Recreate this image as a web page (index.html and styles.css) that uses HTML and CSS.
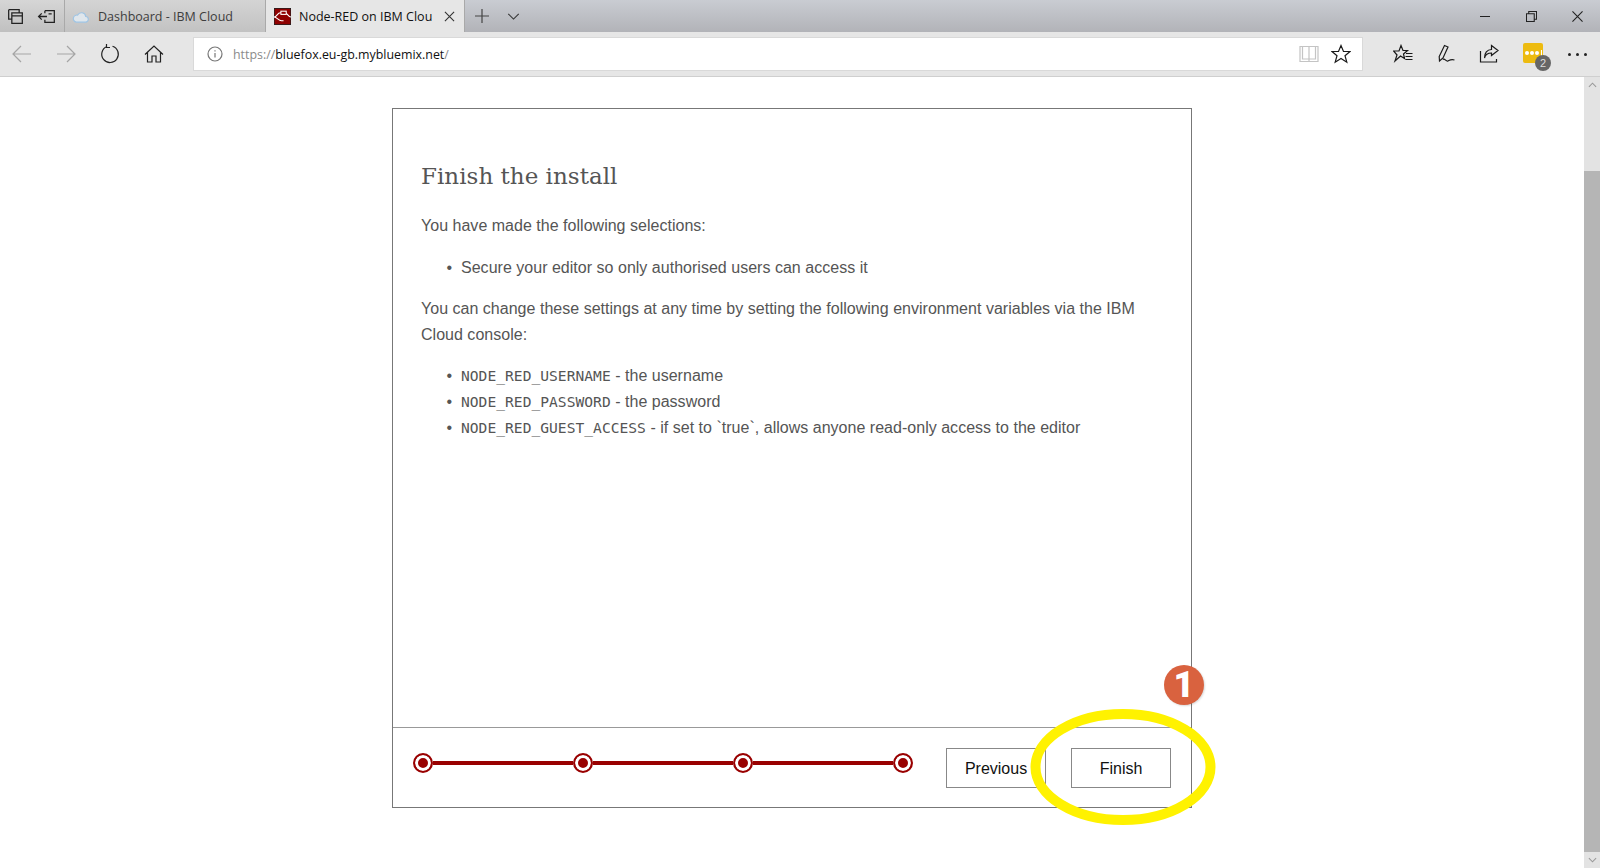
FILE: index.html
```html
<!DOCTYPE html>
<html lang="en">
<head>
<meta charset="UTF-8">
<title>Node-RED on IBM Cloud</title>
<link rel="stylesheet" href="styles.css">
</head>
<body>
<div class="window">
  <!-- tab strip -->
  <div class="tabbar">
    <div class="tab-tools">
      <svg class="icon" viewBox="0 0 20 20"><path d="M3.500 3.500h10v3M3.500 3.500v9h3M6.500 6.500h10v10h-10zM6.500 9.500h10"/></svg>
      <svg class="icon" viewBox="0 0 20 20"><path d="M7.500 4.500h9v11h-9v-2.500M7.500 7v-2.500M1.500 10h8M4.500 7l-3 3 3 3M11 7.500h3"/></svg>
    </div>
    <div class="tab">
      <svg class="favicon" viewBox="0 0 18 18"><path class="cloud" d="M4.500 15h9.500a3 3 0 0 0 .5-6 4.500 4.500 0 0 0-8.500-1.500 3.800 3.800 0 0 0-1.500 7.500z"/></svg>
      <span class="tab-title">Dashboard - IBM Cloud</span>
    </div>
    <div class="tab tab-active">
      <svg class="favicon" viewBox="0 0 16 16">
        <rect width="16" height="16" rx="1.500" fill="#8f0000"/>
        <path class="nodes" d="M0 8.500c3 0 3-4 6-4h2M0 8.500c3 0 4 3.500 7 3.500h2M10 4.500c3 0 3 4 6 4"/>
        <rect class="node" x="6.500" y="3" width="5" height="3"/>
      </svg>
      <span class="tab-title">Node-RED on IBM Clou</span>
      <svg class="tab-close" viewBox="0 0 12 12"><path d="M1 1l10 10M11 1L1 11"/></svg>
    </div>
    <div class="tab-actions">
      <svg class="icon-plus" viewBox="0 0 14 14"><path d="M7 0v14M0 7h14"/></svg>
      <svg class="icon-chevron" viewBox="0 0 14 8"><path d="M1 1l6 6 6-6"/></svg>
    </div>
    <div class="win-controls">
      <div class="win-btn"><span class="win-min"></span></div>
      <div class="win-btn"><svg class="icon-win" viewBox="0 0 12 12"><path d="M3 3V.500h8.500V9H9M.500 3H9v8.500H.500z"/></svg></div>
      <div class="win-btn"><svg class="icon-win" viewBox="0 0 12 12"><path d="M.500 .500l11 11M11.500 .500l-11 11"/></svg></div>
    </div>
  </div>

  <!-- address bar -->
  <div class="toolbar">
    <div class="nav">
      <div class="tool"><svg class="icon-lg faded" viewBox="0 0 20 20"><path d="M19 10H1M9 2l-8 8 8 8"/></svg></div>
      <div class="tool"><svg class="icon-lg faded" viewBox="0 0 20 20"><path d="M1 10h18M11 2l8 8-8 8"/></svg></div>
      <div class="tool"><svg class="icon-lg" viewBox="0 0 20 20"><path d="M7 2.500a8.300 8.300 0 1 0 5.500-.200M6.500 0v3.500H10"/></svg></div>
      <div class="tool"><svg class="icon-lg" viewBox="0 0 20 20"><path d="M1 10.500L10 2l9 8.500M3.500 8.500V18h4.500v-6h4v6h4.500V8.500"/></svg></div>
    </div>
    <div class="address">
      <svg class="icon-info" viewBox="0 0 16 16"><circle cx="8" cy="8" r="7"/><path d="M8 7v4.500M8 4.200v1.300"/></svg>
      <span class="url"><span class="url-scheme">https://</span>bluefox.eu-gb.mybluemix.net<span class="url-scheme">/</span></span>
      <div class="address-tools">
        <div class="addr-tool"><svg class="icon-lg faint" viewBox="0 0 20 20"><path d="M1 2.500h18v15H1zM10 2.500v15M3.500 2.500v12.500H10h6.500V2.500"/></svg></div>
        <div class="addr-tool"><svg class="icon-lg dark" viewBox="0 0 20 20"><path d="M10 1.500l2.500 6h6.500l-5 4.200 1.800 6.500-5.800-3.700-5.800 3.700 1.800-6.500-5-4.200h6.500z"/></svg></div>
      </div>
    </div>
    <div class="extras">
      <div class="tool"><svg class="icon-lg dark" viewBox="0 0 20 20"><path d="M8 1.500l2 5h4.500L10.500 10l1 4.500L7.500 12l-5.500 5 2-6L.500 7h5.500zM13 9.500h6.500M12.500 12.500h7M12.500 15.500h7"/></svg></div>
      <div class="tool"><svg class="icon-lg dark" viewBox="0 0 20 20"><path d="M8.500 1.500l3.500 1.500-5 11-3.500 3-.300-4.500zM7 15.500c2-1.500 3 2.500 5 1.500s3-2 6.500-1"/></svg></div>
      <div class="tool"><svg class="icon-lg dark" viewBox="0 0 20 20"><path d="M1.500 7v11h16v-3M12.500 1.500l6.500 5-6.500 5V9C9 9 6.500 10 5.500 14c0-5 2.500-8.500 7-8.500z"/></svg></div>
      <div class="tool tool-wide">
        <div class="ext-icon">
          <span class="ext-dot"></span><span class="ext-dot"></span><span class="ext-dot"></span><span class="ext-bar"></span>
          <span class="ext-count">2</span>
        </div>
      </div>
      <div class="tool tool-more"><span class="more-dot"></span><span class="more-dot"></span><span class="more-dot"></span></div>
    </div>
  </div>

  <div class="content">
    <div class="page">
      <div class="card">
        <div class="card-body">
          <h2>Finish the install</h2>
          <p>You have made the following selections:</p>
          <ul>
            <li>Secure your editor so only authorised users can access it</li>
          </ul>
          <p>You can change these settings at any time by setting the following environment variables via the IBM Cloud console:</p>
          <ul>
            <li><code>NODE_RED_USERNAME</code> - the username</li>
            <li><code>NODE_RED_PASSWORD</code> - the password</li>
            <li><code>NODE_RED_GUEST_ACCESS</code> - if set to `true`, allows anyone read-only access to the editor</li>
          </ul>
        </div>
        <div class="card-footer">
          <div class="stepper">
            <span class="step"></span><span class="step-line"></span>
            <span class="step"></span><span class="step-line"></span>
            <span class="step"></span><span class="step-line"></span>
            <span class="step"></span>
          </div>
          <div class="buttons">
            <button type="button">Previous</button>
            <button type="button">Finish</button>
          </div>
        </div>
      </div>
    </div>
    <div class="scrollbar">
      <div class="scroll-arrow"><svg viewBox="0 0 10 6"><path d="M1 5l4-4 4 4"/></svg></div>
      <div class="scroll-track"><div class="scroll-thumb"></div></div>
      <div class="scroll-arrow"><svg viewBox="0 0 10 6"><path d="M1 1l4 4 4-4"/></svg></div>
    </div>
  </div>

  <!-- annotation drawn over the screenshot -->
  <svg class="callout-ring" viewBox="0 0 200 130"><ellipse cx="100" cy="65" rx="87.500" ry="53"/></svg>
  <div class="callout-badge">1</div>
</div>
</body>
</html>
```

FILE: styles.css
```css
* {
  box-sizing: border-box;
}
html, body {
  margin: 0;
  padding: 0;
  height: 100%;
  overflow: hidden;
}
body {
  font-family: "Liberation Sans", Arial, sans-serif;
  background-color: #fff;
  color: #555;
}
.window {
  position: relative;
  display: flex;
  flex-direction: column;
  height: 868px;
}
svg {
  fill: none;
  stroke: #222;
  stroke-width: 1.2;
  display: block;
}

/* tab strip */
.tabbar {
  display: flex;
  height: 32px;
  flex-shrink: 0;
  background: linear-gradient(#c9ccd2, #b2b3b8);
  font-family: "Open Sans", sans-serif;
  font-size: 12.500px;
}
.tab-tools {
  display: flex;
  align-items: center;
  gap: 11px;
  width: 64px;
  padding-left: 5px;
  background: linear-gradient(#d6d6d6, #c0c0c0);
}
.icon {
  width: 21px;
  height: 21px;
}
.tab {
  display: flex;
  align-items: center;
  width: 201px;
  padding-left: 7px;
  border-left: 1px solid #a9a9a9;
  background: linear-gradient(#d4d4d4, #c2c2c2);
  color: #3d3d3d;
}
.tab-active {
  width: 200px;
  padding-left: 8px;
  background: #e6e6e6;
  border-right: 1px solid #a9a9a9;
  color: #111;
}
.favicon {
  width: 17px;
  height: 17px;
  margin-right: 9px;
  flex-shrink: 0;
}
.tab-active .favicon {
  margin-right: 8px;
}
.cloud {
  stroke: #9ec4e4;
  fill: #dfe6ec;
}
.nodes {
  stroke: #fff;
  stroke-width: 1;
}
.node {
  fill: #8f0000;
  stroke: #fff;
  stroke-width: 1;
}
.tab-title {
  white-space: nowrap;
}
.tab-close {
  width: 11px;
  height: 11px;
  margin-left: auto;
  margin-right: 9px;
  stroke: #333;
}
.tab-actions {
  display: flex;
  align-items: center;
  gap: 18px;
  padding-left: 10px;
}
.icon-plus {
  width: 14px;
  height: 14px;
  stroke: #444;
}
.icon-chevron {
  width: 13px;
  height: 7px;
  stroke: #333;
}
.win-controls {
  display: flex;
  margin-left: auto;
}
.win-btn {
  display: flex;
  align-items: center;
  justify-content: center;
  width: 46px;
}
.win-min {
  width: 10px;
  height: 1px;
  background-color: #222;
}
.icon-win {
  width: 11px;
  height: 11px;
}

/* address bar */
.toolbar {
  display: flex;
  align-items: center;
  height: 45px;
  flex-shrink: 0;
  background-color: #e6e6e6;
  border-bottom: 1px solid #cfcfcf;
}
.nav, .extras {
  display: flex;
  align-items: center;
}
.tool {
  display: flex;
  align-items: center;
  justify-content: center;
  width: 44px;
  height: 34px;
}
.extras .tool {
  width: 43px;
}
.extras .tool-wide {
  width: 46px;
}
.extras .tool-more {
  gap: 5px;
}
.more-dot {
  width: 3px;
  height: 3px;
  border-radius: 50%;
  background-color: #222;
}
.icon-lg {
  width: 20px;
  height: 20px;
}
.faded {
  stroke: #a5a5a5;
}
.faint {
  stroke: #c4c4c4;
}
.dark {
  stroke: #1a1a1a;
}
.address {
  display: flex;
  align-items: center;
  width: 1170px;
  height: 34px;
  margin-left: 17px;
  padding-left: 13px;
  padding-right: 5px;
  background-color: #fff;
  border: 1px solid #d9d9d9;
  font-family: "Open Sans", sans-serif;
  font-size: 12.400px;
  color: #111;
}
.icon-info {
  width: 16px;
  height: 16px;
  margin-right: 10px;
  stroke: #777;
}
.url-scheme {
  color: #8a8a8a;
}
.address-tools {
  display: flex;
  margin-left: auto;
}
.addr-tool {
  display: flex;
  justify-content: center;
  width: 32px;
}
.extras {
  margin-left: 18px;
}
.ext-icon {
  position: relative;
  display: flex;
  align-items: center;
  gap: 1px;
  width: 20px;
  height: 20px;
  margin-top: -2px;
  padding-left: 2px;
  background-color: #edbb10;
  border-radius: 2px;
}
.ext-dot {
  width: 4px;
  height: 4px;
  border-radius: 50%;
  background-color: #fff;
}
.ext-bar {
  width: 1px;
  height: 7px;
  margin-left: 1px;
  background-color: #fff;
}
.ext-count {
  position: absolute;
  left: 12px;
  top: 12px;
  width: 16px;
  height: 16px;
  border-radius: 50%;
  background-color: #666;
  color: #ddd;
  font-size: 11px;
  line-height: 16px;
  text-align: center;
}

/* page */
.content {
  display: flex;
  flex: 1;
  min-height: 0;
}
.page {
  flex: 1;
  padding-top: 31px;
}
.card {
  display: flex;
  flex-direction: column;
  width: 800px;
  height: 700px;
  margin: 0 auto;
  border: 1px solid #777;
}
.card-body {
  flex: 1;
  padding: 48px 27px 0 28px;
  font-size: 16px;
  line-height: 1.6;
  letter-spacing: 0.02px;
}
h2 {
  margin: 0 0 18px;
  font-family: "DejaVu Serif", serif;
  font-size: 23px;
  font-weight: normal;
  line-height: 38px;
  color: #555;
}
p {
  margin: 16px 0;
}
ul {
  margin: 16px 0;
  padding-left: 40px;
}
li::marker {
  content: "•\00a0\00a0";
}
code {
  font-family: "DejaVu Sans Mono", monospace;
  font-size: 14.600px;
}
.card-footer {
  display: flex;
  height: 80px;
  padding: 20px 20px 0;
  border-top: 1px solid #999;
}
.stepper {
  display: flex;
  align-items: center;
  width: 500px;
  height: 30px;
}
.step {
  width: 20px;
  height: 20px;
  flex-shrink: 0;
  border: 2px solid #990000;
  border-radius: 50%;
  background-color: #990000;
  box-shadow: inset 0 0 0 3px #fff;
}
.step-line {
  flex: 1;
  height: 4px;
  background-color: #990000;
}
.buttons {
  display: flex;
  gap: 25px;
  margin-left: auto;
}
button {
  width: 100px;
  height: 40px;
  padding: 2px 0 0;
  background-color: #fff;
  border: 1px solid #888;
  font-family: "Liberation Sans", Arial, sans-serif;
  font-size: 16px;
  color: #111;
}

/* scrollbar */
.scrollbar {
  display: flex;
  flex-direction: column;
  width: 16px;
  background-color: #e3e3e3;
}
.scroll-arrow {
  display: flex;
  align-items: center;
  justify-content: center;
  height: 16px;
}
.scroll-arrow svg {
  width: 9px;
  height: 6px;
  stroke: #999;
}
.scroll-track {
  flex: 1;
  padding-top: 78px;
}
.scroll-thumb {
  height: 681px;
  background-color: #b5b5b5;
}

/* annotation */
.callout-ring {
  position: absolute;
  left: 1023px;
  top: 702px;
  width: 200px;
  height: 130px;
}
.callout-ring ellipse {
  stroke: #fff200;
  stroke-width: 10;
}
.callout-badge {
  position: absolute;
  left: 1164px;
  top: 665px;
  width: 40px;
  height: 40px;
  border-radius: 50%;
  background-color: #d9623f;
  box-shadow: 1px 1px 2px rgba(0,0,0,0.15);
  color: #fff;
  font-family: Roboto, sans-serif;
  font-size: 36px;
  font-weight: 900;
  line-height: 40px;
  text-align: center;
}
```
